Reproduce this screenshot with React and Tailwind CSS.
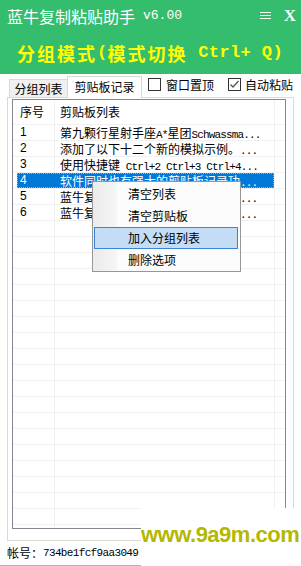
import React from "react";

const isAscii = (s) => /^[\x00-\x7f]+$/.test(s);

function Mixed({ text }) {
  const parts = text.split(/([\x00-\x7f]+)/).filter(Boolean);
  return (
    <>
      {parts.map((p, i) =>
        isAscii(p) ? (
          <span key={i} className="font-['Liberation_Mono',monospace] text-[11px] tracking-[-0.85px] whitespace-pre">
            {p}
          </span>
        ) : (
          <span key={i}>{p}</span>
        )
      )}
    </>
  );
}

const rows = [
  { n: "1", t: "第九颗行星射手座A*星团Schwassma..." },
  { n: "2", t: "添加了以下十二个新的模拟示例。..." },
  { n: "3", t: "使用快捷键 Ctrl+2 Ctrl+3 Ctrl+4..." },
  { n: "4", t: "软件同时也有强大的剪贴板记录功...", sel: true },
  { n: "5", t: "蓝牛复制粘贴助手支持分组管理功..." },
  { n: "6", t: "蓝牛复制粘贴助手可以快速粘贴文..." },
];

function Checkbox({ checked }) {
  return (
    <div className="w-[13px] h-[13px] border border-[#333333] bg-white flex items-center justify-center">
      {checked && (
        <svg width="11" height="11" viewBox="0 0 11 11">
          <polyline points="1.5,5.5 4,8 9.5,2" fill="none" stroke="#555555" strokeWidth="1.3" />
        </svg>
      )}
    </div>
  );
}

function Row({ n, t, sel }) {
  return (
    <div className="h-[16px] border-t border-[#f0f0f0] flex text-[12px] leading-[15px]">
      <div className="w-[4px]" />
      <div
        className={
          sel
            ? "w-[257px] flex bg-[#0078d7] text-white outline-1 outline-dotted outline-[#f0a040] -outline-offset-1"
            : "w-[257px] flex text-black"
        }
      >
        <div className={sel ? "w-[38px] pl-[3px] border-r border-transparent font-['Liberation_Sans',sans-serif]" : "w-[38px] pl-[3px] border-r border-[#f0f0f0] font-['Liberation_Sans',sans-serif]"}>
          {n}
        </div>
        <div className="w-[219px] pl-[5px] whitespace-nowrap overflow-hidden">
          {t && <Mixed text={t} />}
        </div>
      </div>
      <div className="w-px bg-[#f0f0f0]" />
      <div className="flex-1" />
    </div>
  );
}

export default function App() {
  const empty = Array.from({ length: 22 });
  return (
    <div className="relative w-[301px] h-[566px] overflow-hidden bg-white font-['Noto_Sans_CJK_SC','Noto_Sans',sans-serif] text-black">
      {/* title bar */}
      <div className="h-[74px] bg-[#33bd6c] text-white">
        <div className="h-[31px] flex items-center pl-[7px]">
          <span className="text-[16px] leading-none">蓝牛复制粘贴助手</span>
          <span className="ml-[8px] font-['Liberation_Mono',monospace] text-[13px] leading-none">v6.00</span>
          <div className="ml-auto mr-[13px] flex flex-col gap-[2px]">
            <div className="h-px w-[11px] bg-white" />
            <div className="h-px w-[11px] bg-white" />
            <div className="h-px w-[11px] bg-white" />
          </div>
          <span className="mr-[5px] font-['Liberation_Serif',serif] font-bold text-[17px] leading-none text-[#f4fffb]">X</span>
        </div>
        <div className="h-[43px] flex items-center pl-[17px] text-[#ffff00] font-bold text-[18px] leading-none whitespace-pre">
          <span className="tracking-[2px]">分组模式</span>
          <span className="font-['Liberation_Mono',monospace] text-[17px] tracking-[0.4px]">(</span>
          <span className="tracking-[2px]">模式切换</span>
          <span className="font-['Liberation_Mono',monospace] text-[17px] tracking-[0.4px]"> Ctrl+ Q)</span>
        </div>
      </div>

      {/* tabs */}
      <div className="mt-[2px] h-[21px] flex items-end pl-[9px] text-[12px]">
        <div className="h-[18px] w-[58px] bg-[#f0f0f0] border-t border-l border-[#d9d9d9] flex items-center justify-center leading-none">
          分组列表
        </div>
        <div className="relative z-10 -mb-px h-[22px] w-[75px] bg-white border border-b-0 border-[#d9d9d9] flex items-center justify-center leading-none pb-[1px]">
          剪贴板记录
        </div>
        <div className="self-start h-[17px] flex items-center ml-[6px]">
          <Checkbox />
          <span className="ml-[5px] leading-none">窗口置顶</span>
          <div className="ml-[14px]">
            <Checkbox checked />
          </div>
          <span className="ml-[4px] leading-none">自动粘贴</span>
        </div>
      </div>

      {/* panel */}
      <div className="ml-[7px] w-[287px] h-[444px] border border-[#d9d9d9] pt-px pl-[4px]">
        <div className="w-[274px] h-[430px] border border-[#828790] overflow-hidden bg-white">
          <div className="h-[24px] flex text-[12px] leading-[24px]">
            <div className="w-[4px]" />
            <div className="w-[38px] pl-[3px] border-r border-[#f0f0f0]">序号</div>
            <div className="w-[219px] pl-[5px]">剪贴板列表</div>
            <div className="w-px bg-[#f0f0f0]" />
            <div className="flex-1" />
          </div>
          {rows.map((r) => (
            <Row key={r.n} {...r} />
          ))}
          {empty.map((_, i) => (
            <Row key={"e" + i} n="" t="" />
          ))}
        </div>
      </div>

      {/* account */}
      <div className="h-[24px] flex items-center pl-[7px] text-[12px] leading-none">
        <span>帐号：</span>
        <span className="font-['Liberation_Mono',monospace] text-[11px] tracking-[-0.65px]">734be1fcf9aa3049</span>
      </div>
      <div className="h-px bg-[#80d0a0]" />

      {/* context menu */}
      <div className="absolute left-[92px] top-[181px] w-[149px] h-[91px] border border-[#979797] bg-[linear-gradient(to_right,#ebebeb_0px,#f6f6f6_24px,#fcfcfc_24px)] pt-px text-[12px] leading-none">
        <div className="h-[22px] flex items-center pl-[35px]">清空列表</div>
        <div className="h-[22px] flex items-center pl-[35px]">清空剪贴板</div>
        <div className="h-[22px] ml-[1px] mr-[2px] flex items-center pl-[33px] bg-[#c4ddf4] border border-[#3d84d6]">加入分组列表</div>
        <div className="h-[22px] flex items-center pl-[35px]">删除选项</div>
      </div>

      {/* watermark */}
      <div className="absolute right-0 bottom-0 w-[160px] h-[58px] bg-white">
        <div className="mt-[16px] font-['Liberation_Sans',sans-serif] font-black text-[22px] leading-none tracking-[-0.5px] text-[#b3b800] whitespace-nowrap">
          www.9a9m.com
        </div>
      </div>
    </div>
  );
}
